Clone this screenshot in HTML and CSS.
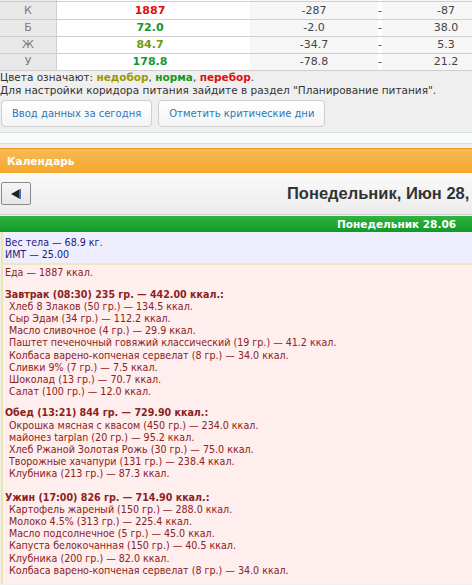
FILE: index.html
```html
<!DOCTYPE html>
<html>
<head>
<meta charset="utf-8">
<link rel="stylesheet" href="styles.css">
</head>
<body>
<div class="page">
  <div class="nutr">
    <div class="row cut"><div class="lbl"></div><div class="val"></div><div class="c3"></div><div class="c4"></div><div class="c5"></div></div>
    <div class="row first"><div class="lbl">К</div><div class="val over">1887</div><div class="c3">-287</div><div class="c4">-</div><div class="c5">-87</div></div>
    <div class="row"><div class="lbl">Б</div><div class="val norm">72.0</div><div class="c3">-2.0</div><div class="c4">-</div><div class="c5">38.0</div></div>
    <div class="row"><div class="lbl">Ж</div><div class="val norm2">84.7</div><div class="c3">-34.7</div><div class="c4">-</div><div class="c5">5.3</div></div>
    <div class="row"><div class="lbl">У</div><div class="val norm3">178.8</div><div class="c3">-78.8</div><div class="c4">-</div><div class="c5">21.2</div></div>
  </div>
  <div class="legend">Цвета означают: <b class="under">недобор</b>, <b class="norm">норма</b>, <b class="over">перебор</b>.</div>
  <div class="legend">Для настройки коридора питания зайдите в раздел "Планирование питания".</div>
  <div class="btns">
    <button class="btn">Ввод данных за сегодня</button>
    <button class="btn">Отметить критические дни</button>
  </div>
  <div class="strip"></div>
  <div class="cal">
    <div class="cal-head">Календарь</div>
    <div class="nav">
      <button class="prev"><svg width="10" height="10" viewBox="0 0 10 10"><polygon points="0,5 9,0 9,10" fill="#222"/><rect x="8" y="0" width="2" height="10" fill="#3a6fd0"/></svg></button>
      <div class="title">Понедельник, Июн 28,</div>
    </div>
    <div class="daybar">Понедельник 28.06</div>
    <div class="day">
      <div class="bodyinfo">Вес тела — 68.9 кг.<br>ИМТ — 25.00</div>
      <div class="food">
        <div class="line">Еда — 1887 ккал.</div>
        <div class="meal">
          <div class="mhead">Завтрак (08:30) 235 гр. — 442.00 ккал.:</div>
          <div class="item">Хлеб 8 Злаков (50 гр.) — 134.5 ккал.</div>
          <div class="item">Сыр Эдам (34 гр.) — 112.2 ккал.</div>
          <div class="item">Масло сливочное (4 гр.) — 29.9 ккал.</div>
          <div class="item">Паштет печеночный говяжий классический (19 гр.) — 41.2 ккал.</div>
          <div class="item">Колбаса варено-копченая сервелат (8 гр.) — 34.0 ккал.</div>
          <div class="item">Сливки 9% (7 гр.) — 7.5 ккал.</div>
          <div class="item">Шоколад (13 гр.) — 70.7 ккал.</div>
          <div class="item">Салат (100 гр.) — 12.0 ккал.</div>
        </div>
        <div class="meal">
          <div class="mhead">Обед (13:21) 844 гр. — 729.90 ккал.:</div>
          <div class="item">Окрошка мясная с квасом (450 гр.) — 234.0 ккал.</div>
          <div class="item">майонез tarplan (20 гр.) — 95.2 ккал.</div>
          <div class="item">Хлеб Ржаной Золотая Рожь (30 гр.) — 75.0 ккал.</div>
          <div class="item">Творожные хачапури (131 гр.) — 238.4 ккал.</div>
          <div class="item">Клубника (213 гр.) — 87.3 ккал.</div>
        </div>
        <div class="meal last">
          <div class="mhead">Ужин (17:00) 826 гр. — 714.90 ккал.:</div>
          <div class="item">Картофель жареный (150 гр.) — 288.0 ккал.</div>
          <div class="item">Молоко 4.5% (313 гр.) — 225.4 ккал.</div>
          <div class="item">Масло подсолнечное (5 гр.) — 45.0 ккал.</div>
          <div class="item">Капуста белокочанная (150 гр.) — 40.5 ккал.</div>
          <div class="item">Клубника (200 гр.) — 82.0 ккал.</div>
          <div class="item">Колбаса варено-копченая сервелат (8 гр.) — 34.0 ккал.</div>
        </div>
      </div>
    </div>
  </div>
</div>
</body>
</html>
```

FILE: styles.css
```css
html, body {
  margin: 0;
  padding: 0;
  overflow: hidden;
  background: #efefef;
}
.page {
  width: 510px;
  font-family: "DejaVu Sans", Verdana, sans-serif;
  color: #333;
}
.nutr {
  background: #fff;
}
.row {
  display: flex;
  height: 16px;
  border-bottom: 1px solid #cfcfcf;
  font-size: 11px;
  line-height: 16px;
}
.row.cut {
  height: 1px;
}
.row.first {
  height: 17px;
  line-height: 17px;
}
.row > div {
  text-align: center;
}
.lbl {
  width: 56px;
  background: #e8e8e8;
  border-right: 1px solid #d0d0d0;
  color: #807878;
}
.val {
  width: 186px;
  padding-right: 7px;
  background: #fff;
  font-weight: bold;
}
.c3, .c5 {
  width: 128px;
  background: #f6f6f6;
  color: #444;
}
.c4 {
  width: 4px;
  background: #fff;
  color: #444;
}
.under { color: #9a9a00; }
.norm { color: #16961e; }
.norm2 { color: #6f9a10; }
.norm3 { color: #0f9a35; }
.over { color: #dd1111; }
.legend {
  font-size: 10.5px;
  line-height: 13px;
  color: #333;
}
.legend b { font-weight: bold; }
.btns {
  display: flex;
  gap: 6px;
  padding: 3px 0 0 1px;
  height: 30px;
  box-sizing: border-box;
}
.btn {
  font-family: "DejaVu Sans", Verdana, sans-serif;
  font-size: 10px;
  color: #2a78b8;
  background: linear-gradient(#ffffff, #f4f4f4);
  border: 1px solid #cfcfcf;
  border-radius: 4px;
  height: 27px;
  padding: 0 10px;
}
.strip {
  margin-top: 5px;
  height: 10px;
  background: #f8fcf8;
  border-top: 1px solid #dcdcdc;
  border-bottom: 1px solid #dcdcdc;
}
.cal {
  margin-top: 4px;
}
.cal-head {
  height: 24px;
  line-height: 24px;
  border-top: 1px solid #ec9818;
  background: linear-gradient(#f8b955, #f5a82c);
  color: #fff;
  font-weight: bold;
  font-size: 10.5px;
  padding-left: 7px;
}
.nav {
  height: 41px;
  display: flex;
  align-items: center;
  background: linear-gradient(#fafafa, #ececec);
  border-bottom: 1px solid #cfcfcf;
}
.prev {
  flex-shrink: 0;
  width: 30px;
  height: 23px;
  margin-left: 1px;
  border: 1px solid #8a8a8a;
  border-radius: 2px;
  background: linear-gradient(#f6f6f6, #e6e6e6);
  padding: 0;
  display: flex;
  align-items: center;
  justify-content: center;
}
.title {
  margin-left: 256px;
  font-family: "Liberation Sans", Arial, sans-serif;
  font-size: 16.5px;
  font-weight: bold;
  color: #333;
  white-space: nowrap;
}
.daybar {
  margin-top: 1px;
  height: 16px;
  line-height: 16px;
  background: linear-gradient(#2fb43f, #0f9a28);
  color: #fff;
  font-weight: bold;
  font-size: 10.5px;
  text-align: right;
  padding-right: 54px;
}
.day {
  margin-left: 1px;
  border-left: 2px solid #ece6a8;
  font-family: "DejaVu Sans Condensed", "DejaVu Sans", sans-serif;
  font-stretch: condensed;
  font-size: 10.6px;
  line-height: 12.2px;
}
.bodyinfo {
  background: #eeeeff;
  color: #1c1c80;
  padding: 4px 0 3px 2px;
  border-bottom: 2px solid #efe8b8;
}
.food {
  background: #ffeeee;
  color: #8b2222;
  padding: 1px 0 8px 2px;
}
.meal {
  margin-top: 9px;
}
.meal.last {
  margin-top: 11px;
}
.mhead {
  font-weight: bold;
}
.item {
  padding-left: 4px;
}
```
